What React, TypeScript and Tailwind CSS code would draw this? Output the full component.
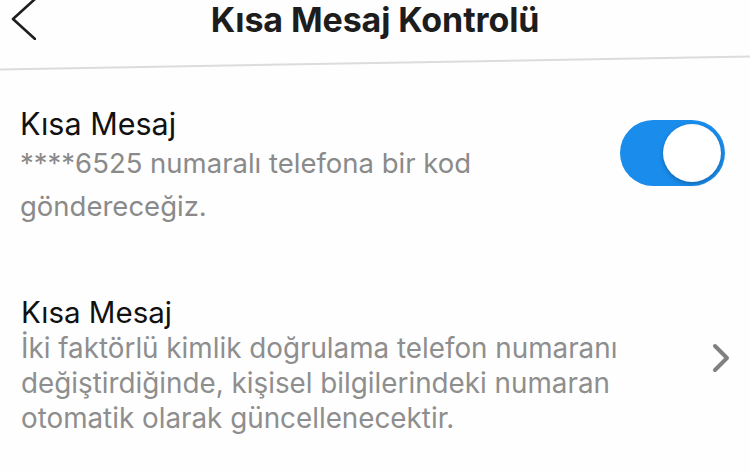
function Toggle({ on }: { on: boolean }) {
  return (
    <div
      className={`flex h-[66px] w-[105px] shrink-0 items-center rounded-full p-[4px] ${
        on ? "justify-end bg-[#1a8ceb]" : "justify-start bg-[#e5e5ea]"
      }`}
    >
      <div className="h-[58px] w-[58px] rounded-full bg-white shadow-[0_2px_4px_rgba(0,0,0,0.25)]" />
    </div>
  );
}

export default function App() {
  return (
    <div className="h-[472px] w-[750px] overflow-hidden bg-[#fefefe] font-['Inter','Liberation_Sans',sans-serif]">
      <div className="grid h-[62px] grid-cols-[1fr_auto_1fr] items-start">
        <svg width="26" height="42" viewBox="0 0 26 42" className="ml-[10px] -mt-[2px]">
          <path d="M25 1 L3 21 L25 41" fill="none" stroke="#1e1e1e" strokeWidth="2.6" strokeLinecap="round" strokeLinejoin="round" />
        </svg>
        <h1 className="text-[34px] font-bold leading-[40px] tracking-[-0.1px] text-[#1d1d1d]">
          Kısa Mesaj Kontrolü
        </h1>
        <div />
      </div>
      <div className="h-[2px] w-full -rotate-1 bg-[#dcdcdc]" />

      <div className="flex items-start justify-between pl-[20px] pr-[25px] pt-[42px]">
        <div>
          <div className="text-[30.5px] leading-[36px] text-[#111]">Kısa Mesaj</div>
          <div className="text-[27.5px] leading-[43px] text-[#8a8a8a]">
            ****6525 numaralı telefona bir kod
            <br />
            göndereceğiz.
          </div>
        </div>
        <div className="pt-[14px]">
          <Toggle on />
        </div>
      </div>

      <div className="flex items-start justify-between pl-[21px] pr-[20px] pt-[66px]">
        <div>
          <div className="text-[29.5px] leading-[36px] text-[#111]">Kısa Mesaj</div>
          <div className="mt-[1px] text-[27.8px] leading-[35px] text-[#8e8e8e]">
            İki faktörlü kimlik doğrulama telefon numaranı
            <br />
            değiştirdiğinde, kişisel bilgilerindeki numaran
            <br />
            otomatik olarak güncellenecektir.
          </div>
        </div>
        <svg width="18" height="30" viewBox="0 0 18 30" className="mt-[49px]">
          <path d="M3 3 L15 15 L3 27" fill="none" stroke="#808080" strokeWidth="4" strokeLinecap="round" strokeLinejoin="round" />
        </svg>
      </div>
    </div>
  );
}
